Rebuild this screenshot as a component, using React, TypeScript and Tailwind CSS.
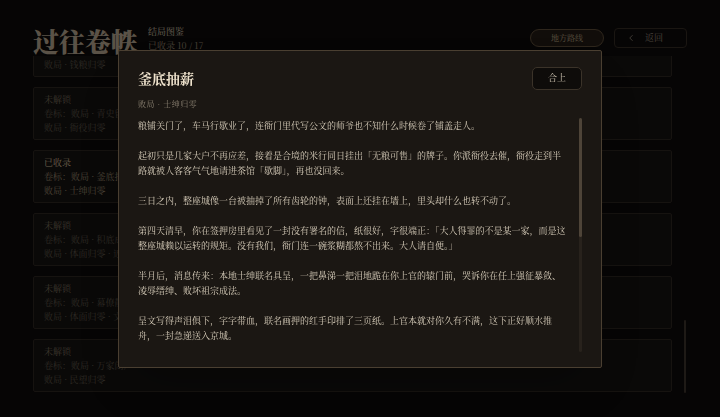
import { ChevronLeft } from "lucide-react";

const cards = [
  { status: "未解锁", tag: "卷标：败局 · 钱粮见底", end: "败局 · 钱粮归零", open: false },
  { status: "未解锁", tag: "卷标：败局 · 青史留骂", end: "败局 · 衙役归零", open: false },
  { status: "已收录", tag: "卷标：败局 · 釜底抽薪", end: "败局 · 士绅归零", open: true },
  { status: "未解锁", tag: "卷标：败局 · 积底成灾", end: "败局 · 体面归零 · 近臣离心", open: false },
  { status: "未解锁", tag: "卷标：败局 · 幕僚散尽", end: "败局 · 体面归零 · 文书停摆", open: false },
  { status: "未解锁", tag: "卷标：败局 · 万家闭户", end: "败局 · 民望归零", open: false },
];

const story = [
  "粮铺关门了，车马行歇业了，连衙门里代写公文的师爷也不知什么时候卷了铺盖走人。",
  "起初只是几家大户不再应差，接着是合境的米行同日挂出「无粮可售」的牌子。你派衙役去催，衙役走到半路就被人客客气气地请进茶馆「歇脚」，再也没回来。",
  "三日之内，整座城像一台被抽掉了所有齿轮的钟，表面上还挂在墙上，里头却什么也转不动了。",
  "第四天清早，你在签押房里看见了一封没有署名的信，纸很好，字很端正：「大人得罪的不是某一家，而是这整座城赖以运转的规矩。没有我们，衙门连一碗浆糊都熬不出来。大人请自便。」",
  "半月后，消息传来：本地士绅联名具呈，一把鼻涕一把泪地跪在你上官的辕门前，哭诉你在任上强征暴敛、凌辱缙绅、败坏祖宗成法。",
  "呈文写得声泪俱下，字字带血，联名画押的红手印排了三页纸。上官本就对你久有不满，这下正好顺水推舟，一封急递送入京城。",
];

function EndingCard({ status, tag, end, open }: (typeof cards)[number]) {
  return (
    <div className="h-[53px] shrink-0 rounded-[2px] border border-[#2c2620] bg-[#141210] px-[10px] pt-[5px] text-[9px] leading-[14px]">
      <p className={open ? "text-[#d4be9c]" : "text-[#786c5c]"}>{status}</p>
      <p className={open ? "text-[#94846c]" : "text-[#5c5448]"}>{tag}</p>
      <p className={open ? "text-[#94846c]" : "text-[#5c5448]"}>{end}</p>
    </div>
  );
}

export default function App() {
  return (
    <div className="relative flex h-[417px] w-full flex-col overflow-hidden bg-[#0c0a0a] font-['Noto_Serif_CJK_SC','Noto_Sans_CJK_SC',serif]">
      {/* page header */}
      <header className="flex shrink-0 items-start px-[33px] pt-[25px]">
        <h1 className="mt-[3px] text-[26px] font-black leading-none text-[#b4a48e]">过往卷帙</h1>
        <div className="ml-[11px] text-[9px] leading-[14px]">
          <p className="text-[#d0c2ac]">结局图鉴</p>
          <p className="text-[#948470]">已收录 10 / 17</p>
        </div>
        <div className="ml-auto flex items-start gap-[10px]">
          <button className="mt-[4px] h-[18px] w-[74px] rounded-full border border-[#5c4c38] bg-[#221a14] text-[8px] text-[#b4a080]">
            地方路线
          </button>
          <button className="mt-[3px] flex h-[20px] w-[73px] items-center gap-[9px] rounded-[4px] border border-[#342c24] pl-[11px] text-[9px] text-[#948878]">
            <ChevronLeft size={10} strokeWidth={2} />
            返回
          </button>
        </div>
      </header>

      {/* ending list, scrolled part way */}
      <div className="mt-[2px] flex min-h-0 flex-1 overflow-hidden pl-[33px] pr-[34px]">
        <div className="-mt-[32px] flex w-[639px] flex-col gap-[10px]">
          {cards.map((c, i) => (
            <EndingCard key={i} {...c} />
          ))}
        </div>
        <div className="ml-auto w-[2px]">
          <div className="mt-[264px] h-[73px] rounded-full bg-[#3c342c]" />
        </div>
      </div>

      {/* story dialog */}
      <div className="fixed inset-0 flex items-center justify-center bg-black/50">
        <div className="flex h-[318px] w-[484px] flex-col rounded-[2px] border border-[#4a3f31] bg-[#1b1713] px-[19px] pt-[16px] pb-[15px] shadow-2xl">
          <div className="flex h-[23px] items-center justify-between">
            <h2 className="text-[14px] font-bold leading-none text-[#eee2cc]">釜底抽薪</h2>
            <button className="h-[23px] w-[50px] rounded-[5px] border border-[#3b3329] bg-[#0e0c0a] text-[9px] text-[#d3c9b6]">
              合上
            </button>
          </div>
          <p className="mt-[8px] text-[8px] leading-[12px] tracking-[0.5px] text-[#8a8071]">败局 · 士绅归零</p>
          <div className="mt-[8px] flex min-h-0 flex-1">
            <div className="flex w-[428px] flex-col gap-[15px] overflow-hidden text-[9px] leading-[15px] text-[#d8cebb]">
              {story.map((p, i) => (
                <p key={i}>{p}</p>
              ))}
            </div>
            <div className="ml-auto w-[3px] rounded-full bg-[#28221c]">
              <div className="h-[119px] rounded-full bg-[#4e4438]" />
            </div>
          </div>
        </div>
      </div>
    </div>
  );
}
